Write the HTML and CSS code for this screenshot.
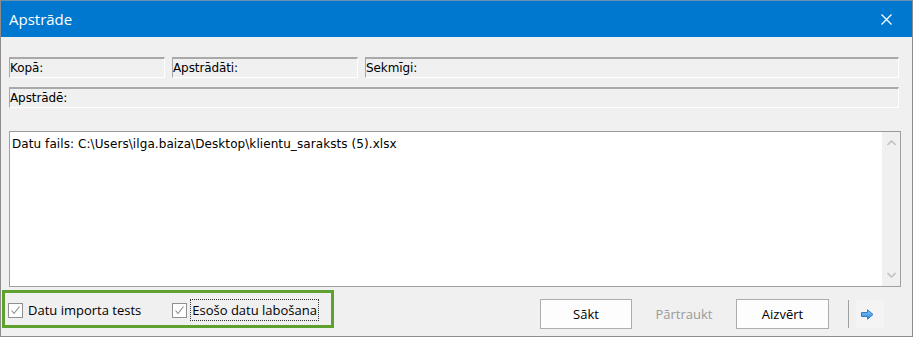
FILE: index.html
```html
<!DOCTYPE html>
<html lang="lv">
<head>
<meta charset="utf-8">
<title>Apstrāde</title>
<link rel="stylesheet" href="styles.css">
</head>
<body>
<div class="window">
  <div class="titlebar">
    <span class="title">Apstrāde</span>
    <svg class="close" width="11" height="11" viewBox="0 0 11 11"><path d="M0.5 0.5 L10.5 10.5 M10.5 0.5 L0.5 10.5" stroke="#fff" stroke-width="1.3" fill="none"/></svg>
  </div>
  <div class="content">
    <div class="fields">
      <div class="field f-kopa">Kopā:</div>
      <div class="field f-apstr">Apstrādāti:</div>
      <div class="field f-sekm">Sekmīgi:</div>
    </div>
    <div class="fields">
      <div class="field f-full">Apstrādē:</div>
    </div>
    <div class="log">
      <div class="log-text">Datu fails: C:\Users\ilga.baiza\Desktop\klientu_saraksts (5).xlsx</div>
      <div class="scrollbar">
        <svg width="9" height="6" viewBox="0 0 9 6"><path d="M0.5 5 L4.5 1 L8.5 5" stroke="#c2c2c2" stroke-width="1.6" fill="none"/></svg>
        <svg width="9" height="6" viewBox="0 0 9 6"><path d="M0.5 1 L4.5 5 L8.5 1" stroke="#c2c2c2" stroke-width="1.6" fill="none"/></svg>
      </div>
    </div>
    <div class="footer">
      <div class="options">
        <label class="check"><span class="box"><svg width="11" height="11" viewBox="0 0 11 11"><path d="M1.5 5.5 L4 8.5 L9.5 1.5" stroke="#8a8a8a" stroke-width="1.1" fill="none"/></svg></span><span>Datu importa tests</span></label>
        <label class="check check2"><span class="box"><svg width="11" height="11" viewBox="0 0 11 11"><path d="M1.5 5.5 L4 8.5 L9.5 1.5" stroke="#8a8a8a" stroke-width="1.1" fill="none"/></svg></span><span class="focus">Esošo datu labošana</span></label>
      </div>
      <div class="buttons">
        <button class="btn">Sākt</button>
        <button class="btn disabled">Pārtraukt</button>
        <button class="btn btn-close">Aizvērt</button>
        <span class="sep"></span>
        <span class="next">
          <svg width="13" height="11" viewBox="0 0 13 11">
            <defs><linearGradient id="g" x1="0" y1="0" x2="0" y2="1"><stop offset="0" stop-color="#8cc8f5"/><stop offset="1" stop-color="#2f86d8"/></linearGradient></defs>
            <path d="M0.5 3.5 H6.5 V0.8 L12 5.5 L6.5 10.2 V7.5 H0.5 Z" fill="url(#g)" stroke="#2c7cc9" stroke-width="1"/>
          </svg>
        </span>
      </div>
    </div>
  </div>
</div>
</body>
</html>
```
FILE: styles.css
```css
* { box-sizing: border-box; }
html, body { margin: 0; padding: 0; background: #f0f0f0; }
.window {
  width: 913px;
  height: 337px;
  display: flex;
  flex-direction: column;
  background: #f0f0f0;
  border: 1px solid #8c8c8c;
  border-top: none;
  font-family: "DejaVu Sans", sans-serif;
  font-size: 12px;
  color: #000;
}
.titlebar {
  height: 37px;
  flex: none;
  background: #0078cf;
  border-top: 1px solid #6a8fb0;
  display: flex;
  align-items: center;
  justify-content: space-between;
  padding: 0 20px 0 8px;
}
.title {
  font-family: "Open Sans", "Noto Sans", sans-serif;
  font-size: 15px;
  color: #fff;
}
.content {
  flex: 1;
  display: flex;
  flex-direction: column;
  padding: 20px 11px 0 8px;
}
.fields {
  display: flex;
  gap: 7px;
  margin-bottom: 9px;
}
.field {
  height: 21px;
  border-top: 2px solid #a9a9a9;
  border-left: 1px solid #a9a9a9;
  border-right: 1px solid #fff;
  border-bottom: 1px solid #fff;
  padding: 1px 0 0 0;
  line-height: 16px;
  white-space: nowrap;
  letter-spacing: -0.1px;
}
.f-kopa { width: 156px; }
.f-apstr { width: 186px; }
.f-sekm { flex: 1; }
.f-full { flex: 1; margin-right: 2px; }
.fields:first-child .f-sekm { margin-right: 2px; }
.log {
  margin-top: 14px;
  height: 156px;
  background: #fff;
  border: 1px solid #a0a0a0;
  border-top-color: #9a9a9a;
  display: flex;
}
.log-text {
  flex: 1;
  padding: 5px 2px;
  font-size: 12px;
  letter-spacing: 0.08px;
}
.scrollbar {
  width: 18px;
  background: #f0f0f0;
  display: flex;
  flex-direction: column;
  justify-content: space-between;
  align-items: center;
  padding: 8px 0 8px 0;
}
.footer {
  display: flex;
  align-items: flex-start;
  justify-content: space-between;
  margin-top: 3px;
  margin-left: -7px;
}
.options {
  width: 332px;
  height: 38px;
  border: 3px solid #5ea12e;
  display: flex;
  align-items: center;
  padding-left: 3px;
  padding-top: 2px;
  font-family: "Open Sans", "Noto Sans", sans-serif;
  font-size: 13px;
}
.check {
  display: flex;
  align-items: center;
  gap: 5px;
}
.check2 { margin-left: 31px; }
.box {
  width: 15px;
  height: 15px;
  border: 1px solid #8f8f8f;
  background: #fff;
  display: flex;
  align-items: center;
  justify-content: center;
}
.focus {
  border: 1px dotted #333;
  padding: 0 1px;
  line-height: 20px;
  margin-left: -2px;
}
.buttons {
  display: flex;
  align-items: center;
  margin-top: 9px;
  margin-right: 17px;
}
.btn {
  width: 92px;
  height: 30px;
  margin-left: 6px;
  border: 1px solid #adadad;
  background: #fdfdfd;
  font-family: "Open Sans", "Noto Sans", sans-serif;
  font-size: 13px;
  color: #000;
  padding: 0;
}
.btn.disabled {
  border-color: transparent;
  background: transparent;
  color: #9a9a9a;
}
.btn-close { width: 93px; }
.sep {
  width: 1px;
  height: 28px;
  background: #a0a0a0;
  margin-left: 19px;
}
.next {
  width: 28px;
  height: 28px;
  margin-left: 7px;
  background: #f4f4f4;
  display: flex;
  align-items: center;
  justify-content: center;
  padding-right: 6px;
}
```
